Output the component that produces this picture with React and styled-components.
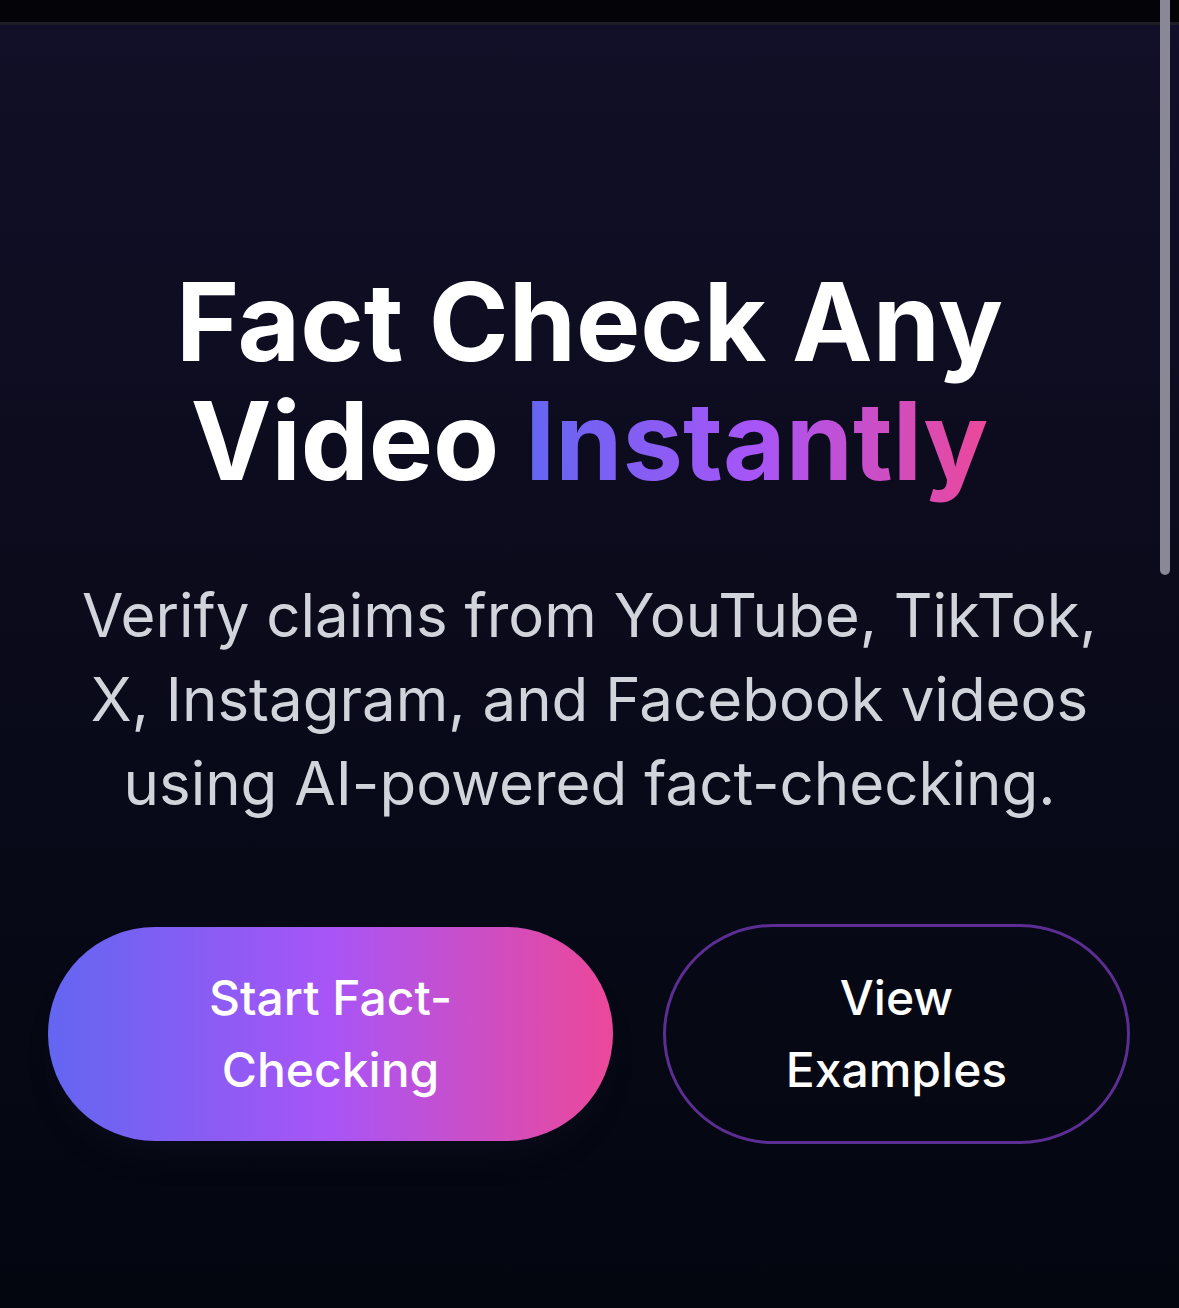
import styled, { createGlobalStyle } from 'styled-components';

const GlobalStyle = createGlobalStyle`
  * {
    box-sizing: border-box;
  }

  html,
  body {
    margin: 0;
    padding: 0;
    background: #03060f;
    font-family: Inter, 'Noto Sans', 'Liberation Sans', sans-serif;
    -webkit-font-smoothing: antialiased;
  }
`;

const Page = styled.div`
  position: relative;
  min-height: 1308px;
  display: flex;
  flex-direction: column;
  background: linear-gradient(180deg, #120f28 0%, #0b0b1c 45%, #03060f 100%);
  overflow: hidden;
`;

const TopBar = styled.header`
  height: 25px;
  background: #040408;
  border-bottom: 3px solid #1e1d26;
`;

const Hero = styled.section`
  display: flex;
  flex-direction: column;
  align-items: center;
  padding: 238px 48px 0;
  text-align: center;
`;

const Title = styled.h1`
  margin: 0;
  font-size: 108px;
  line-height: 118.8px;
  font-weight: 700;
  color: #ffffff;
`;

const GradientText = styled.span`
  background: linear-gradient(90deg, #6366f1 0%, #a855f7 50%, #ec4899 100%);
  -webkit-background-clip: text;
  background-clip: text;
  color: transparent;
`;

const Subtitle = styled.p`
  margin: 72px 0 0;
  max-width: 1040px;
  font-size: 60px;
  line-height: 84px;
  font-weight: 400;
  color: #d1d5db;
`;

const Actions = styled.div`
  display: flex;
  align-items: center;
  gap: 50px;
  margin-top: 99px;
  align-self: stretch;
`;

const Button = styled.a`
  display: flex;
  align-items: center;
  justify-content: center;
  flex: 0 0 ${({ width }) => width}px;
  border-radius: 999px;
  font-size: 48px;
  line-height: 72px;
  font-weight: 500;
  color: #ffffff;
  text-align: center;
  text-decoration: none;
  cursor: pointer;
`;

const PrimaryButton = styled(Button)`
  padding: 35px 130px;
  background: linear-gradient(90deg, #6366f1 0%, #a855f7 50%, #ec4899 100%);
  box-shadow: 0 24px 40px -18px rgba(40, 40, 70, 0.2);
`;

const SecondaryButton = styled(Button)`
  padding: 35px 80px;
  background: transparent;
  border: 3px solid #5c2e94;
`;

const ScrollThumb = styled.div`
  position: absolute;
  top: 0;
  right: 9px;
  width: 10px;
  height: 575px;
  border-radius: 0 0 5px 5px;
  background: #8a8896;
`;

export default function App() {
  return (
    <>
      <GlobalStyle />
      <Page>
        <TopBar />
        <Hero>
          <Title>
            Fact Check Any Video <GradientText>Instantly</GradientText>
          </Title>
          <Subtitle>
            Verify claims from YouTube, TikTok, X, Instagram, and Facebook videos using AI-powered
            fact-checking.
          </Subtitle>
          <Actions>
            <PrimaryButton width={565}>Start Fact-Checking</PrimaryButton>
            <SecondaryButton width={467}>View Examples</SecondaryButton>
          </Actions>
        </Hero>
        <ScrollThumb />
      </Page>
    </>
  );
}
